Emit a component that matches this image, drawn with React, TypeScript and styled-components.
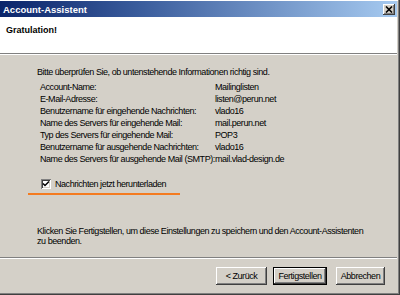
import React from 'react';
import styled, { createGlobalStyle } from 'styled-components';

const GlobalStyle = createGlobalStyle`
  html, body {
    margin: 0;
    padding: 0;
    background: #d4d0c8;
  }
  body {
    font-family: 'Liberation Sans', Arial, sans-serif;
  }
`;

const rows: [string, string][] = [
  ['Account-Name:', 'Mailinglisten'],
  ['E-Mail-Adresse:', 'listen@perun.net'],
  ['Benutzername für eingehende Nachrichten:', 'vlado16'],
  ['Name des Servers für eingehende Mail:', 'mail.perun.net'],
  ['Typ des Servers für eingehende Mail:', 'POP3'],
  ['Benutzername für ausgehende Nachrichten:', 'vlado16'],
  ['Name des Servers für ausgehende Mail (SMTP):', 'mail.vlad-design.de'],
];

const App = (): React.ReactElement => {
  return (
    <>
      <GlobalStyle />
      <Window>
        <TitleBar>
          <TitleText>Account-Assistent</TitleText>
          <CloseButton aria-label="Schließen">
            <svg width="8" height="7" viewBox="0 0 8 7">
              <path d="M1 0.5 L7 6.5 M7 0.5 L1 6.5" stroke="#000" strokeWidth="1.6" />
            </svg>
          </CloseButton>
        </TitleBar>
        <Header>
          <HeaderTitle>Gratulation!</HeaderTitle>
        </Header>
        <Rule />
        <Body>
          <Intro>Bitte überprüfen Sie, ob untenstehende Informationen richtig sind.</Intro>
          <InfoGrid>
            {rows.map(([label, value]) => (
              <React.Fragment key={label}>
                <Cell>{label}</Cell>
                <Cell>{value}</Cell>
              </React.Fragment>
            ))}
          </InfoGrid>
          <CheckRow>
            <CheckBox>
              <svg width="8" height="8" viewBox="0 0 8 8">
                <path d="M1 3.5 L3 5.5 L7 1.5" stroke="#000" strokeWidth="1.5" fill="none" />
              </svg>
            </CheckBox>
            <CheckLabel>Nachrichten jetzt herunterladen</CheckLabel>
          </CheckRow>
          <Highlight />
          <Outro>
            Klicken Sie Fertigstellen, um diese Einstellungen zu speichern und den Account-Assistenten
            <br />
            zu beenden.
          </Outro>
        </Body>
        <Rule />
        <ButtonBar>
          <Button $width={51}>&lt; Zurück</Button>
          <Button $width={54} $primary>
            Fertigstellen
          </Button>
          <Button $width={49} $gap={9}>
            Abbrechen
          </Button>
        </ButtonBar>
      </Window>
    </>
  );
};

export default App;

const Window = styled.div`
  width: 400px;
  height: 295px;
  box-sizing: border-box;
  padding: 1px 3px 2px 0;
  display: flex;
  flex-direction: column;
  background: #d4d0c8;
  box-shadow: inset -1px -1px 0 #404040, inset -2px -2px 0 #808080, inset 0 1px 0 #ffffff;
  font-size: 9px;
  letter-spacing: -0.45px;
  color: #000;
`;

const TitleBar = styled.div`
  height: 16px;
  display: flex;
  align-items: center;
  justify-content: space-between;
  padding: 0 2px 0 3px;
  background: linear-gradient(to right, #0a246a 0%, #3a5c9c 35%, #a6caf0 100%);
`;

const TitleText = styled.span`
  color: #fff;
  font-weight: bold;
  font-size: 9.5px;
  letter-spacing: 0;
`;

const CloseButton = styled.div`
  width: 12px;
  height: 11px;
  box-sizing: border-box;
  display: flex;
  align-items: center;
  justify-content: center;
  background: #d4d0c8;
  box-shadow: inset -1px -1px 0 #404040, inset 1px 1px 0 #ffffff, inset -2px -2px 0 #808080;
`;

const Header = styled.div`
  height: 36px;
  box-sizing: border-box;
  padding: 8px 0 0 6px;
  background: #fff;
`;

const HeaderTitle = styled.h1`
  margin: 0;
  font-size: 9px;
  line-height: 11px;
  font-weight: bold;
  letter-spacing: 0;
`;

const Rule = styled.div`
  height: 0;
  border-top: 1px solid #808080;
  border-bottom: 1px solid #ffffff;
`;

const Body = styled.div`
  flex: 1;
  display: flex;
  flex-direction: column;
  padding: 11px 0 11px 37px;
`;

const Intro = styled.p`
  margin: 0;
  line-height: 12px;
`;

const InfoGrid = styled.div`
  display: grid;
  grid-template-columns: 175px 1fr;
  grid-auto-rows: 12px;
  margin-top: 3px;
  padding-left: 3px;
`;

const Cell = styled.div`
  line-height: 12px;
  white-space: nowrap;
`;

const CheckRow = styled.label`
  display: flex;
  align-items: center;
  margin-top: 13px;
  padding-left: 4px;
  height: 12px;
`;

const CheckBox = styled.span`
  width: 10px;
  height: 10px;
  box-sizing: border-box;
  display: flex;
  align-items: center;
  justify-content: center;
  background: #fff;
  box-shadow: inset 1px 1px 0 #808080, inset -1px -1px 0 #ffffff, inset 2px 2px 0 #404040, inset -2px -2px 0 #d4d0c8;
`;

const CheckLabel = styled.span`
  margin-left: 4px;
  line-height: 12px;
`;

const Highlight = styled.div`
  margin: 3px 0 0 -9px;
  width: 152px;
  height: 2px;
  background: #f47b20;
`;

const Outro = styled.p`
  margin: auto 0 0;
  line-height: 10px;
`;

const ButtonBar = styled.div`
  height: 34px;
  display: flex;
  align-items: flex-start;
  justify-content: flex-end;
  padding: 8px 12px 0 0;
  box-sizing: border-box;
`;

const Button = styled.button<{ $width: number; $primary?: boolean; $gap?: number }>`
  width: ${({ $width }) => $width}px;
  height: 18px;
  margin-left: ${({ $gap }) => $gap ?? 6}px;
  padding: 0;
  border: ${({ $primary }) => ($primary ? '1px solid #000' : 'none')};
  background: #d4d0c8;
  font-family: 'Liberation Sans', Arial, sans-serif;
  font-size: 9px;
  letter-spacing: -0.45px;
  color: #000;
  box-shadow: inset -1px -1px 0 #404040, inset 1px 1px 0 #ffffff, inset -2px -2px 0 #808080;
`;
